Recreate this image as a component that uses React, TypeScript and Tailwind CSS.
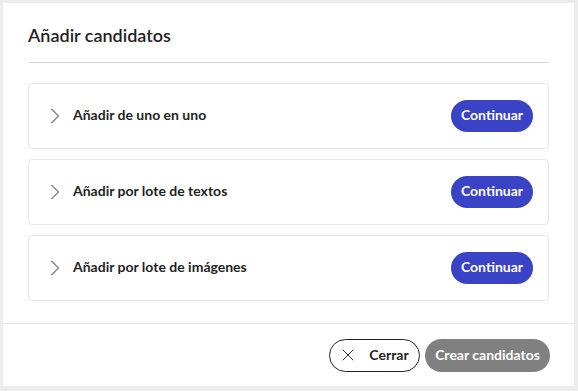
import { X } from 'lucide-react';

const options = [
  'Añadir de uno en uno',
  'Añadir por lote de textos',
  'Añadir por lote de imágenes',
];

const Chevron = () => (
  <svg width="10" height="16" viewBox="0 0 10 16" fill="none" className="shrink-0">
    <path d="M1.5 1 L8.5 8 L1.5 15" stroke="#222" strokeWidth="1" />
  </svg>
);

const App = () => {
  return (
    <div
      className="h-[391px] w-[578px] bg-[#ececec] p-[3px] pr-[4px] pb-[5px] text-[#1f1f1f]"
      style={{ fontFamily: 'Lato, "Noto Sans", sans-serif' }}
    >
      <div className="flex h-full flex-col bg-white">
        <div className="px-[25px]">
          <h2 className="border-b border-[#d6d6d6] pt-[21px] pb-[15px] text-[18px] leading-[23px] font-semibold">
            Añadir candidatos
          </h2>
          <div className="mt-[20px] flex flex-col gap-[10px] pb-[22px]">
            {options.map((label) => (
              <div
                key={label}
                className="flex h-[66px] items-center rounded-[4px] border border-[#e6e6e6] pr-[15px] pl-[21px]"
              >
                <Chevron />
                <span className="ml-[13px] flex-1 pb-[3px] text-[14px] font-bold">{label}</span>
                <button className="h-[32px] w-[82px] rounded-full bg-[#3a43c6] pb-[3px] text-[14px] font-bold text-white">
                  Continuar
                </button>
              </div>
            ))}
          </div>
        </div>
        <div className="flex flex-1 items-center justify-end gap-[5px] border-t border-[#e6e6e6] pr-[24px]">
          <button className="flex h-[33px] w-[91px] items-center justify-center gap-[11px] rounded-full border border-[#222] pr-[2px] text-[14px] font-bold">
            <X size={20} strokeWidth={1.1} />
            <span className="pb-[2px]">Cerrar</span>
          </button>
          <button className="h-[33px] w-[125px] rounded-full bg-[#808080] pb-[2px] text-[14px] font-bold text-white">
            Crear candidatos
          </button>
        </div>
      </div>
    </div>
  );
};

export default App;
